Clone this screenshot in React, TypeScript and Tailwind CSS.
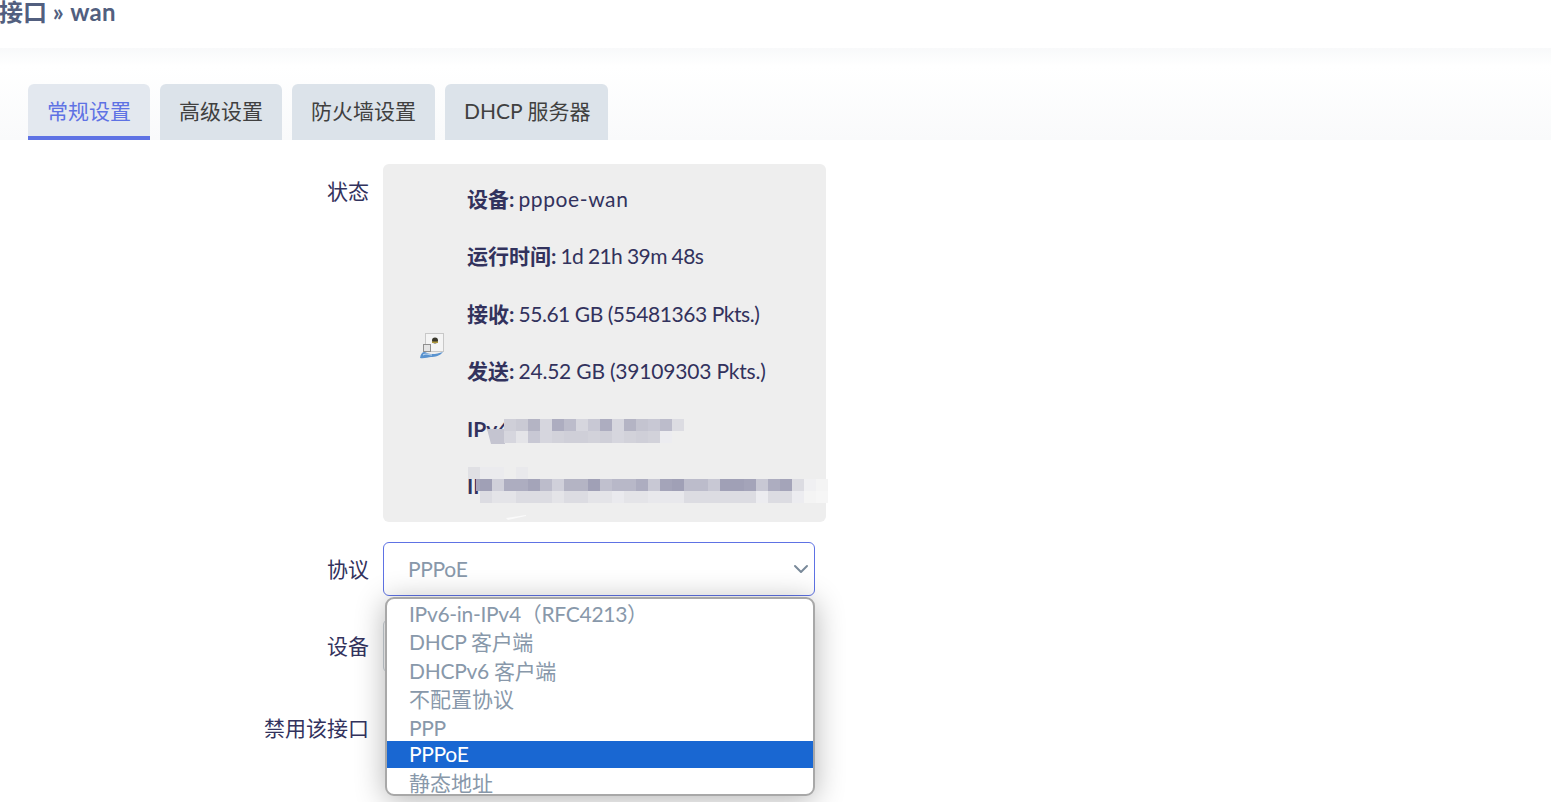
import { ChevronDown } from "lucide-react";

const font = "font-['Lato','Noto_Sans_CJK_SC',sans-serif]";

const tabs = ["常规设置", "高级设置", "防火墙设置", "DHCP 服务器"];

const stats = [
  { label: "设备:", value: "pppoe-wan", spacing: "tracking-[0.6px]" },
  { label: "运行时间:", value: "1d 21h 39m 48s", spacing: "tracking-[-0.6px]" },
  { label: "接收:", value: "55.61 GB (55481363 Pkts.)", spacing: "tracking-[-0.45px]" },
  { label: "发送:", value: "24.52 GB (39109303 Pkts.)", spacing: "tracking-[-0.2px]" },
  { label: "IPv4:", value: "", spacing: "" },
  { label: "IPv6:", value: "", spacing: "" },
];

const options = ["IPv6-in-IPv4（RFC4213）", "DHCP 客户端", "DHCPv6 客户端", "不配置协议", "PPP", "PPPoE", "静态地址"];

const v4Mosaic = [
  ["#cfcfd8", "#cacad4", "#b4b4c4", "#d6d6de", "#adadc0", "#bcbccb", "#d6d6de", "#c8c8d4", "#adadc0", "#d6d6de", "#b4b4c4", "#c4c4d0", "#c8c8d4", "#bcbccb", "#dcdce2"],
  ["#d6d6de", "#e4e4e8", "#c8c8d4", "#d6d6de", "#d2d2da", "#cfcfd8", "#cfcfd8", "#d2d2da", "#cfcfd8", "#d6d6de", "#d2d2da", "#cfcfd8", "#d2d2da", "#ececf0", "#eeeeee"],
];

const v6Top = [["#e0e0e4", "#ebebee", "#ebebee", "#eeeeee", "#e9e9ec"]];

const v6Mosaic = [
  ["#a0a0b6", "#d0d0da", "#adadc0", "#adadc0", "#a4a4b9", "#bcbccb", "#d0d0da", "#b4b4c4", "#b4b4c4", "#a0a0b6", "#c0c0ce", "#b8b8c8", "#b8b8c8", "#adadc0", "#c8c8d4", "#a4a4b9", "#a0a0b6", "#bcbccb", "#bcbccb", "#c8c8d4", "#a0a0b6", "#a0a0b6", "#a4a4b9", "#c8c8d4", "#adadc0", "#a4a4b9", "#dcdce2", "#f0f0f2", "#f4f4f4"],
  ["#dcdce2", "#e4e4e8", "#e4e4e8", "#dcdce2", "#dcdce2", "#dcdce2", "#e4e4e8", "#dcdce2", "#dcdce2", "#e4e4e8", "#e4e4e8", "#eaeaee", "#e4e4e8", "#e4e4e8", "#e8e8ec", "#e8e8ec", "#e8e8ec", "#dcdce2", "#dcdce2", "#dcdce2", "#dcdce2", "#dcdce2", "#dcdce2", "#ececf0", "#dcdce2", "#dcdce2", "#ececf0", "#f4f4f4", "#f6f6f6"],
];

function Mosaic({ rows, className }: { rows: string[][]; className: string }) {
  return (
    <div className={`absolute flex flex-col ${className}`}>
      {rows.map((row, i) => (
        <div key={i} className="flex">
          {row.map((c, j) => (
            <div key={j} className="w-3 h-3" style={{ backgroundColor: c }} />
          ))}
        </div>
      ))}
    </div>
  );
}

function PortIcon() {
  return (
    <svg width="24" height="26" viewBox="0 0 24 26" className="shrink-0">
      <rect x="5.5" y="0.5" width="18" height="18" fill="#f4f4f4" stroke="#c8c8c8" />
      <circle cx="15" cy="7.5" r="3" fill="#3a382c" />
      <path d="M12 8.5h6v1.5h-6z" fill="#b09a3c" />
      <rect x="3.5" y="11.5" width="7" height="7" fill="#e4e4e4" stroke="#8f8f8f" />
      <path d="M0 25c1-6 4-7 7-5 4 2 10 1 16-1-3 4-8 5-12 5-3 0-7 2-11 1z" fill="#5a93cf" />
      <path d="M3 22c3-2 6 0 9 0" stroke="#cfe2f4" fill="none" />
    </svg>
  );
}

function FieldRow({ label, className, labelClass, children }: { label: string; className?: string; labelClass?: string; children?: React.ReactNode }) {
  return (
    <div className={`flex ${className ?? ""}`}>
      <div className={`w-[369px] text-right text-[#32325d] shrink-0 ${labelClass ?? ""}`}>{label}</div>
      <div className="ml-3.5 flex-1">{children}</div>
    </div>
  );
}

export default function App() {
  return (
    <div className={`${font} h-[802px] w-[1551px] overflow-hidden bg-white text-[21px] leading-[28px] relative`}>
      <header className="h-[49px] bg-white">
        <h2 className="-mt-[1px] -ml-[1px] font-bold text-[24px] leading-[26px] text-[#525f7f]">
          接口 <span className="tracking-[0.3px]">» wan</span>
        </h2>
      </header>
      <div className="h-[92px] bg-gradient-to-b from-[#f8f9fa] via-white via-20% to-[#f9fafb] pt-9 pl-7">
        <ul className="flex gap-2.5">
          {tabs.map((t, i) => (
            <li
              key={t}
              className={`h-14 pl-[19px] flex items-center rounded-t-md ${i === 3 ? "pr-[18px]" : "pr-[19px]"} ${
                i === 0
                  ? "bg-[#e3e8ef] text-[#5e72e4] border-b-4 border-[#5e72e4] pt-[2px]"
                  : "bg-[#dce3ea] text-[#404040] pb-[2px]"
              }`}
            >
              {t}
            </li>
          ))}
        </ul>
      </div>

      <div className="pt-6">
        <FieldRow label="状态" className="items-start" labelClass="pt-[13px]">
          <div className="relative w-[443px] h-[358px] bg-[#eeeeee] rounded-md pt-[6px] flex text-[#32325d]">
            <div className="w-[84px] flex items-center justify-end pr-[7px] pb-[2px] shrink-0">
              <div className="mr-[16px] mt-[2px]">
                <PortIcon />
              </div>
            </div>
            <div className="flex-1">
              {stats.map((s) => (
                <div key={s.label} className="h-[57.5px] flex items-center whitespace-nowrap">
                  <span className="font-bold">{s.label}</span>
                  {s.value && <span className={`ml-1 ${s.spacing}`}>{s.value}</span>}
                </div>
              ))}
            </div>
            <svg width="18" height="15" viewBox="0 0 18 15" className="absolute left-[104px] top-[265px]">
              <path d="M0 0L18 0L18 15L4 15Z" fill="#c4c4d0" />
            </svg>
            <Mosaic rows={v4Mosaic} className="left-[121px] top-[255px]" />
            <Mosaic rows={v6Top} className="left-[85px] top-[303px]" />
            <div className="absolute left-[93px] top-[315px] w-1 h-3 bg-[#a6a6bb]" />
            <Mosaic rows={v6Mosaic} className="left-[97px] top-[315px]" />
            <svg width="20" height="5" viewBox="0 0 20 5" className="absolute left-[123px] top-[351px]">
              <path d="M0 3L20 0L20 1L2 5Z" fill="#fafafa" />
            </svg>
          </div>
        </FieldRow>

        <div className="relative">
          <FieldRow label="协议" className="mt-[20px] items-center h-[54px]">
            <div className="w-[432px] h-[54px] rounded-md border border-[#5e72e4] bg-white flex items-center justify-between pl-6 pr-[1px] text-[#8898aa]">
              <span className="tracking-[-0.3px]">PPPoE</span>
              <ChevronDown size={24} strokeWidth={2} className="text-[#7a8a9a]" />
            </div>
          </FieldRow>
          <FieldRow label="设备" className="mt-[23px] items-center h-[54px]">
            <div className="w-[432px] h-[54px] rounded-md border border-[#cad1d7] bg-white" />
          </FieldRow>
          <FieldRow label="禁用该接口" className="mt-[28px]" labelClass="pt-[13px]" />

          <ul className="absolute left-[385px] top-[55px] w-[430px] h-[199px] bg-white border-2 border-[#a8a8a8] rounded-[9px] overflow-hidden shadow-[0_4px_30px_rgba(0,0,0,0.3)] text-[#8898aa] leading-[29px]">
            {options.map((o) => (
              <li
                key={o}
                className={`pl-[22px] whitespace-nowrap ${/[A-Z]/.test(o) ? "tracking-[-0.3px]" : ""} ${
                  o === "PPPoE" ? "bg-[#1967d2] text-white h-[27px] leading-[26px]" : "h-[28.4px]"
                }`}
              >
                {o}
              </li>
            ))}
          </ul>
        </div>
      </div>
    </div>
  );
}
